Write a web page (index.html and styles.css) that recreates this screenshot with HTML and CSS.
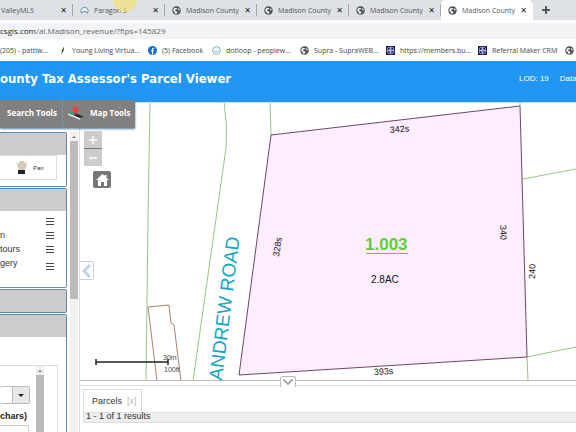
FILE: index.html
```html
<!DOCTYPE html>
<html lang="en">
<head>
    <meta charset="UTF-8">
    <meta name="viewport" content="width=device-width, initial-scale=1.0">
    <title>Madison County Tax Assessor's Parcel Viewer</title>
    <link rel="stylesheet" href="styles.css">
</head>
<body>

    <svg class="defs" aria-hidden="true">
        <symbol id="globe" viewBox="0 0 16 16">
            <circle cx="8" cy="8" r="7.5" fill="#4a4e52"/>
            <path d="M3 5l3-2 3 1-1 2-3 1 1 2 4 1-1 3-3 1-1-3-3-2zM10 4l3 1 1 3-3-1z" fill="#f1f3f4"/>
        </symbol>
        <symbol id="knot" viewBox="0 0 16 16">
            <rect width="16" height="16" fill="#15184f"/>
            <g fill="none" stroke="#b9c2ee" stroke-width="1.4">
                <circle cx="5" cy="5" r="2.5"/><circle cx="11" cy="5" r="2.5"/>
                <circle cx="5" cy="11" r="2.5"/><circle cx="11" cy="11" r="2.5"/>
                <path d="M8 1v14M1 8h14"/>
            </g>
        </symbol>
    </svg>

    <div class="tabs">
        <div class="tab first"><span>ValleyMLS</span><button aria-label="Close">✕</button></div>
        <div class="tab">
            <svg class="icon" viewBox="0 0 16 16"><path d="M3 13a6.500 6.500 0 1 1 10 0l-2-3H5z" fill="#e9f3f7" stroke="#4f8196" stroke-width="1.500"/></svg>
            <span>Paragon 5</span><button aria-label="Close">✕</button>
            <i class="pointer"></i>
        </div>
        <div class="tab"><svg class="icon"><use href="#globe"/></svg><span>Madison County</span><button aria-label="Close">✕</button></div>
        <div class="tab"><svg class="icon"><use href="#globe"/></svg><span>Madison County</span><button aria-label="Close">✕</button></div>
        <div class="tab"><svg class="icon"><use href="#globe"/></svg><span>Madison County</span><button aria-label="Close">✕</button></div>
        <div class="tab active"><svg class="icon"><use href="#globe"/></svg><span>Madison County</span><button aria-label="Close">✕</button></div>
        <button class="new-tab" aria-label="New tab">
            <svg width="8" height="8" viewBox="0 0 8 8"><path d="M4 0v8M0 4h8" stroke="#333" stroke-width="1.500"/></svg>
        </button>
    </div>

    <div class="address"><div class="url"><b>csgis.com</b>/al.Madison_revenue/?fips=145829</div></div>

    <nav class="bookmarks">
        <a href="#" class="w-phone">(205) - pattiw...</a>
        <a href="#" class="w-young"><svg class="icon" viewBox="0 0 16 16"><path d="M6 15l1-8 4-6-1 7z" fill="#3c3c28"/><path d="M7 7l3-5" stroke="#c9b23c"/></svg>Young Living Virtua...</a>
        <a href="#" class="w-face"><svg class="icon" viewBox="0 0 16 16"><circle cx="8" cy="8" r="8" fill="#1271c9"/><path d="M11 4H9.500Q8 4 8 6v9M5.500 8.500h5" fill="none" stroke="#fff" stroke-width="2"/></svg>(5) Facebook</a>
        <a href="#" class="w-dot"><svg class="icon" viewBox="0 0 16 16"><circle cx="8" cy="8" r="7" fill="#f4fafc" stroke="#6fa3b5" stroke-width="1.500"/><path d="M4 8q4 6 8 0" fill="none" stroke="#6fa3b5" stroke-width="1.500"/></svg>dotloop - peoplew...</a>
        <a href="#" class="w-supra"><svg class="icon"><use href="#globe"/></svg>Supra - SupraWEB...</a>
        <a href="#" class="w-members"><svg class="icon"><use href="#knot"/></svg>https://members.bu...</a>
        <a href="#" class="w-crm"><svg class="icon"><use href="#knot"/></svg>Referral Maker CRM</a>
        <a href="#" aria-label="More"><svg class="icon"><use href="#globe"/></svg></a>
    </nav>

    <header>
        <h1>ounty Tax Assessor's Parcel Viewer</h1>
        <div class="status"><span>LOD: 19</span><span>Data</span></div>
    </header>

    <main>
        <div class="toolbar">
            <button>Search Tools</button>
            <button>
                <svg width="16" height="15" viewBox="0 0 16 15"><path d="M0 9l5-2 11 5-5 1z" fill="#1f2b33"/><path d="M0 9l12 5" stroke="#e8f4ee" stroke-width="1.500"/><path d="M0 8l5-1 2 4z" fill="#39a88e"/><path d="M7 10L4 5a3.500 3.500 0 1 1 7 0z" fill="#dc4b40"/></svg>
                Map Tools
            </button>
        </div>

        <aside>
            <div class="panels">
                <section class="panel nav">
                    <div class="bar"></div>
                    <button class="pan">
                        <svg width="12" height="13" viewBox="0 0 12 13"><path d="M0 1l3 2V0h5v2l3-1-1 6-2 2H3z" fill="#d6c8bb"/><path d="M2 9h7v4H2z" fill="#1d242c"/></svg>
                        Pan
                    </button>
                </section>
                <section class="panel layers">
                    <div class="bar"></div>
                    <ul>
                        <li><span></span><button class="menu" aria-label="Options"></button></li>
                        <li><span>n</span><button class="menu" aria-label="Options"></button></li>
                        <li><span>tours</span><button class="menu" aria-label="Options"></button></li>
                        <li><span>gery</span><button class="menu" aria-label="Options"></button></li>
                    </ul>
                </section>
                <section class="panel closed"><div class="bar"></div></section>
                <section class="panel search">
                    <div class="bar"></div>
                    <div class="search-box">
                        <div class="fields">
                            <button class="combo" aria-label="Choose field"><i></i></button>
                            <label for="term">chars)</label>
                            <input type="text" id="term">
                        </div>
                        <div class="scroll inner"><i></i></div>
                    </div>
                </section>
            </div>
            <div class="scroll outer"><i></i></div>
        </aside>

        <div class="content">
            <div class="map">
                <svg class="parcels" viewBox="80 103 496 277" preserveAspectRatio="xMinYMin slice">
                    <g fill="none" stroke="#9cc483">
                        <path d="M150 102L148 220L146 381"/>
                        <path d="M224 102Q228 125 226 148L193 381"/>
                        <path d="M270 102L271 135M520 102V106"/>
                        <path d="M523 179L576 169M527 357L576 347M527 357L528 381"/>
                    </g>
                    <path d="M157 381L148 307L169 305L171 323L174 325L181 381" fill="none" stroke="#a98172"/>
                    <path d="M271 135L520 106L527 357L239 375Z" fill="#fdeeff" stroke="#6b4668"/>
                    <g class="measure">
                        <text transform="translate(390 133) rotate(-5)">342s</text>
                        <text transform="translate(374 375) rotate(-3)">393s</text>
                        <text transform="translate(279 257) rotate(-81)">328s</text>
                        <text transform="translate(500 225) rotate(88)">340</text>
                        <text transform="translate(535 279) rotate(-88)">240</text>
                        <text x="371" y="283" class="acres">2.8AC</text>
                    </g>
                    <text x="365" y="250" class="parcel-id">1.003</text>
                    <path d="M366 253.500H408" stroke="#5fcf35"/>
                    <text class="road" transform="translate(222 381) rotate(-83)">ANDREW ROAD</text>
                    <path d="M96 362H168M96 359V365M168 359V365" stroke="#222" stroke-width="1.500"/>
                    <g class="scale"><text x="163" y="360">30m</text><text x="164" y="372">100ft</text></g>
                </svg>
                <div class="zoom">
                    <button aria-label="Zoom in"><svg width="10" height="10" viewBox="0 0 10 10"><path d="M5 1v8M1 5h8" stroke="#fff" stroke-width="1.500"/></svg></button>
                    <button aria-label="Zoom out"><svg width="10" height="10" viewBox="0 0 10 10"><path d="M1 5h8" stroke="#fff" stroke-width="1.500"/></svg></button>
                </div>
                <button class="home" aria-label="Home"><svg width="13" height="12" viewBox="0 0 13 12"><path d="M0 6l6.500-6 2 2V1h2v3L13 6h-2v6H8V8H5v4H2V6z" fill="#fff"/></svg></button>
                <button class="slide" aria-label="Hide panel"><svg width="9" height="14" viewBox="0 0 9 14"><path d="M8 1L2 7l6 6" fill="none" stroke="#c5d0ea" stroke-width="3"/></svg></button>
                <button class="drop" aria-label="Hide results"><svg width="10" height="6" viewBox="0 0 10 6"><path d="M0 0l5 5 5-5" fill="none" stroke="#aaa" stroke-width="2"/></svg></button>
            </div>
            <div class="results">
                <div class="result-tab">Parcels <span>[x]</span></div>
                <div class="count">1 - 1 of 1 results</div>
            </div>
        </div>
    </main>

</body>
</html>
```
FILE: styles.css
```css
* {
    box-sizing: border-box;
}

body {
    margin: 0;
    height: 100vh;
    display: flex;
    flex-direction: column;
    overflow: hidden;
    font-family: "Liberation Sans", Arial, sans-serif;
    font-size: 9px;
    color: #333;
    background: #fff;
}

button {
    padding: 0;
    border: none;
    background: none;
    font: inherit;
    color: inherit;
    cursor: pointer;
}

.defs {
    position: absolute;
    width: 0;
    height: 0;
}

.icon {
    width: 9px;
    height: 9px;
    flex: none;
}

/* browser bars */
.tabs,
.address,
.bookmarks {
    flex: none;
    font-family: "Open Sans", "Segoe UI", sans-serif;
    font-size: 7px;
    white-space: nowrap;
}

.tabs {
    display: flex;
    height: 20px;
    background: #dee1e6;
    color: #555;
}

.tab {
    position: relative;
    display: flex;
    align-items: center;
    gap: 5px;
    width: 92px;
    padding: 0 6px 0 7px;
    background: linear-gradient(#a2a6ab, #a2a6ab) right / 1px 12px no-repeat;
}

.tab.first {
    width: 73px;
    padding-left: 1px;
}

.tab.active {
    background: #fff;
    border-radius: 5px 5px 0 0;
}

.tab span {
    flex: 1;
    overflow: hidden;
}

.tab button {
    font-family: "DejaVu Sans", sans-serif;
    font-size: 8px;
    color: #222;
}

.pointer {
    position: absolute;
    left: 40px;
    top: -12px;
    width: 24px;
    height: 24px;
    border-radius: 50%;
    background: rgba(245, 226, 120, 0.7);
}

.new-tab {
    display: flex;
    align-items: center;
    padding-left: 9px;
}

.address {
    padding: 3px 0 2px;
}

.url {
    height: 16px;
    line-height: 16px;
    background: #f1f3f4;
    font-size: 8px;
    color: #666;
}

.url b {
    font-weight: normal;
    color: #222;
}

.bookmarks {
    display: flex;
    align-items: center;
    height: 20px;
    padding-bottom: 2px;
    overflow: hidden;
}

.bookmarks a {
    display: flex;
    flex: none;
    align-items: center;
    gap: 5px;
    color: #444;
    text-decoration: none;
}

.w-phone { width: 58px; }
.w-young { width: 90px; }
.w-face { width: 64px; }
.w-dot { width: 88px; }
.w-supra { width: 86px; }
.w-members { width: 92px; }
.w-crm { width: 87px; }

/* page header */
header {
    flex: none;
    display: flex;
    align-items: center;
    justify-content: space-between;
    height: 41px;
    padding-bottom: 6px;
    background: #2196f3;
    color: #fff;
    overflow: hidden;
}

h1 {
    margin: 0;
    font-family: "DejaVu Sans Condensed", Tahoma, sans-serif;
    font-size: 13px;
    white-space: nowrap;
}

.status {
    display: flex;
    gap: 11px;
    width: 57px;
    font-size: 8px;
    white-space: nowrap;
}

main {
    position: relative;
    flex: 1;
    min-height: 0;
    display: grid;
    grid-template-columns: 80px 1fr;
}

.toolbar {
    position: absolute;
    z-index: 2;
    top: -2px;
    left: 0;
    display: flex;
    width: 135px;
    height: 28px;
    background: #808080;
    box-shadow: 0 1px 2px #557f9e;
}

.toolbar button {
    display: flex;
    align-items: center;
    gap: 6px;
    padding: 0 0 3px 5px;
    font-family: "Open Sans", sans-serif;
    font-size: 8px;
    font-weight: bold;
    color: #fff;
    white-space: nowrap;
}

.toolbar button:first-child {
    width: 63px;
    padding-left: 7px;
    border-right: 1px solid #6f95ad;
}

/* left side */
aside {
    display: flex;
    justify-content: space-between;
    min-height: 0;
    padding-top: 30px;
    border-right: 1px solid #ddd;
    overflow: hidden;
}

.panels {
    display: flex;
    flex-direction: column;
    gap: 1px;
    width: 67px;
}

.panel {
    flex: none;
    border: 1px solid #5f8cab;
    border-left: none;
    border-radius: 0 2px 2px 0;
}

.bar {
    height: 22px;
    background: #ccc;
}

.nav { height: 55px; }
.layers { height: 100px; }
.search { flex: 1; }

.pan {
    display: flex;
    align-items: center;
    gap: 5px;
    width: 57px;
    height: 25px;
    padding-left: 16px;
    border: 1px solid #ddd;
    border-left: none;
    font-size: 6px;
}

.panel ul {
    margin: 0;
    padding: 3px 12px 0 0;
    list-style: none;
}

.panel li {
    display: flex;
    align-items: center;
    justify-content: space-between;
    height: 14px;
}

.panel li:last-child {
    height: 20px;
}

.panel li:last-child span {
    padding-bottom: 6px;
}

.menu {
    width: 8px;
    height: 7px;
    background: repeating-linear-gradient(#444 0 1px, #fff 1px 3px);
}

.search-box {
    display: flex;
    justify-content: space-between;
    width: 58px;
    height: 100px;
    margin-top: 28px;
    padding-right: 13px;
    border: 1px solid #ddd;
    border-left: none;
}

.fields {
    display: flex;
    flex-direction: column;
    width: 30px;
    padding-top: 20px;
}

.combo {
    display: flex;
    justify-content: flex-end;
    height: 18px;
    border: 1px solid #bbb;
    border-left: none;
    border-radius: 2px;
}

.combo i {
    display: flex;
    align-items: center;
    justify-content: center;
    width: 17px;
    height: 16px;
    background: #e8e8e8;
    border-left: 1px solid #bbb;
}

.combo i::after,
.scroll::before {
    content: "";
    border: 3px solid transparent;
    border-top-color: #222;
    border-bottom: none;
}

.fields label {
    margin: 7px 0 3px;
    line-height: 11px;
    font-weight: bold;
    color: #222;
}

.fields input {
    width: 29px;
    height: 18px;
    border: 1px solid #ccc;
    border-left: none;
}

.scroll {
    display: flex;
    flex-direction: column;
    align-items: center;
    flex: none;
    width: 8px;
    background: #f1f1f1;
}

.scroll::before {
    margin: 4px 0 3px;
    border: 2px solid transparent;
    border-top: none;
    border-bottom-color: #777;
}

.scroll i {
    width: 8px;
    background: #bbb;
}

.outer {
    margin-right: 1px;
}

.outer i {
    height: 158px;
}

.inner i {
    flex: 1;
}

/* map and results */
.content {
    display: flex;
    flex-direction: column;
    min-width: 0;
    min-height: 0;
}

.map {
    position: relative;
    flex: 1;
    min-height: 0;
    border-top: 1px solid #d5dce2;
    border-bottom: 1px solid #bbb;
}

.parcels {
    display: block;
    position: absolute;
    inset: 0;
    width: 100%;
    height: 100%;
}

.measure {
    font-size: 9px;
    fill: #111;
}

.acres {
    font-size: 10px;
}

.parcel-id {
    font-size: 17px;
    font-weight: bold;
    fill: #5fcf35;
}

.road {
    font-size: 19px;
    fill: #18a5bf;
}

.scale {
    font-size: 7px;
    fill: #444;
}

.zoom {
    position: absolute;
    left: 4px;
    top: 28px;
    display: flex;
    flex-direction: column;
    gap: 1px;
    width: 18px;
    background: #777;
}

.zoom button {
    display: flex;
    align-items: center;
    justify-content: center;
    height: 17px;
    background: #ccc;
}

.home {
    position: absolute;
    left: 13px;
    top: 68px;
    display: flex;
    align-items: center;
    justify-content: center;
    width: 18px;
    height: 17px;
    border-radius: 2px;
    background: #777;
}

.slide {
    position: absolute;
    left: 0;
    top: 158px;
    display: flex;
    align-items: center;
    justify-content: center;
    width: 14px;
    height: 19px;
    border: 1px solid #ccc;
    border-left: none;
    border-radius: 0 2px 2px 0;
    background: #fff;
}

.drop {
    position: absolute;
    left: 200px;
    bottom: -7px;
    display: flex;
    align-items: center;
    justify-content: center;
    width: 16px;
    height: 11px;
    border: 1px solid #bbb;
    border-bottom: none;
    border-radius: 3px 3px 0 0;
    background: #fff;
}

.results {
    flex: none;
    height: 51px;
    padding: 4px 0 0 3px;
    background: linear-gradient(#ddd, #ddd) 0 4px / 100% 1px no-repeat;
}

.result-tab {
    display: flex;
    gap: 5px;
    width: 59px;
    height: 23px;
    margin-top: 4px;
    padding: 6px 0 0 8px;
    border: 1px solid #ddd;
    border-bottom: none;
}

.result-tab span {
    color: #bbb;
}

.count {
    height: 11px;
    padding-left: 2px;
    border: 1px solid #ddd;
    border-right: none;
    background: #eee;
    line-height: 7px;
}
```
